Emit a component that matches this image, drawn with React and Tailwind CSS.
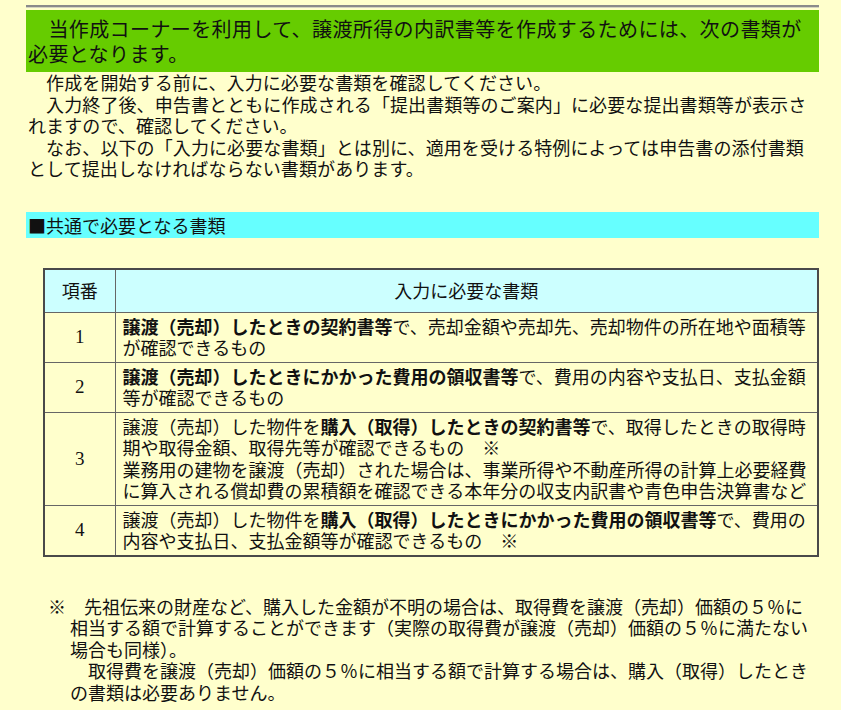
import React from 'react'

const FONT = { fontFamily: '"Noto Sans CJK JP", "Noto Sans", sans-serif' }
const SP = '\u3000'

const ROWS = [
  {
    no: '1',
    body: (
      <>
        <b>譲渡（売却）したときの契約書等</b>で、売却金額や売却先、売却物件の所在地や面積等が確認できるもの
      </>
    ),
  },
  {
    no: '2',
    body: (
      <>
        <b>譲渡（売却）したときにかかった費用の領収書等</b>で、費用の内容や支払日、支払金額等が確認できるもの
      </>
    ),
  },
  {
    no: '3',
    body: (
      <>
        譲渡（売却）した物件を<b>購入（取得）したときの契約書等</b>で、取得したときの取得時期や取得金額、取得先等が確認できるもの{SP}※
        <br />
        業務用の建物を譲渡（売却）された場合は、事業所得や不動産所得の計算上必要経費に算入される償却費の累積額を確認できる本年分の収支内訳書や青色申告決算書など
      </>
    ),
  },
  {
    no: '4',
    body: (
      <>
        譲渡（売却）した物件を<b>購入（取得）したときにかかった費用の領収書等</b>で、費用の内容や支払日、支払金額等が確認できるもの{SP}※
      </>
    ),
  },
]

export default function App() {
  return (
    <div className="min-h-[710px] w-[841px] bg-[#ffffcc] text-[#111] pt-[5px]" style={FONT}>
      <div className="ml-[26px] w-[793px]">
        {/* rule */}
        <div className="h-[3px] border-t-2 border-b border-t-[#8a8a8a] border-b-[#d4d4c0]" />

        {/* heading */}
        <div className="mt-[2px] bg-[#66cc00] px-[2px] py-[6px] text-[20px] tracking-[0.4px] leading-[25px]">
          {SP}当作成コーナーを利用して、譲渡所得の内訳書等を作成するためには、次の書類が必要となります。
        </div>

        {/* intro */}
        <div className="px-[2px] text-[18px] tracking-[0.1px] leading-[21.5px]">
          <p>{SP}作成を開始する前に、入力に必要な書類を確認してください。</p>
          <p>{SP}入力終了後、申告書とともに作成される「提出書類等のご案内」に必要な提出書類等が表示されますので、確認してください。</p>
          <p>{SP}なお、以下の「入力に必要な書類」とは別に、適用を受ける特例によっては申告書の添付書類として提出しなければならない書類があります。</p>
        </div>

        {/* section bar */}
        <div className="mt-[32.5px] bg-[#66ffff] px-[2px] text-[18px] leading-[26px]">■共通で必要となる書類</div>

        {/* table */}
        <table className="mt-[30px] ml-[17px] w-[776px] border-collapse border-2 border-[#4a4a4a] text-[18px] leading-[21.5px]">
          <thead>
            <tr className="bg-[#ccffff]">
              <th className="w-[71px] border border-[#666] py-[10px] font-normal">項番</th>
              <th className="border border-[#666] py-[10px] font-normal">入力に必要な書類</th>
            </tr>
          </thead>
          <tbody>
            {ROWS.map(r => (
              <tr key={r.no}>
                <td className="border border-[#666] text-center text-[19px]" style={{ fontFamily: '"Liberation Serif", serif' }}>{r.no}</td>
                <td className="border border-[#666] pl-[7px] pr-[6px] py-[3px]">{r.body}</td>
              </tr>
            ))}
          </tbody>
        </table>

        {/* note */}
        <div className="mt-[39px] pl-[44px] pr-0 text-[18px] leading-[21.5px]">
          <p className="-indent-[22px]">
            ※{SP}先祖伝来の財産など、購入した金額が不明の場合は、取得費を譲渡（売却）価額の５％に相当する額で計算することができます（実際の取得費が譲渡（売却）価額の５％に満たない場合も同様）。
          </p>
          <p>{SP}取得費を譲渡（売却）価額の５％に相当する額で計算する場合は、購入（取得）したときの書類は必要ありません。</p>
        </div>
      </div>
    </div>
  )
}
